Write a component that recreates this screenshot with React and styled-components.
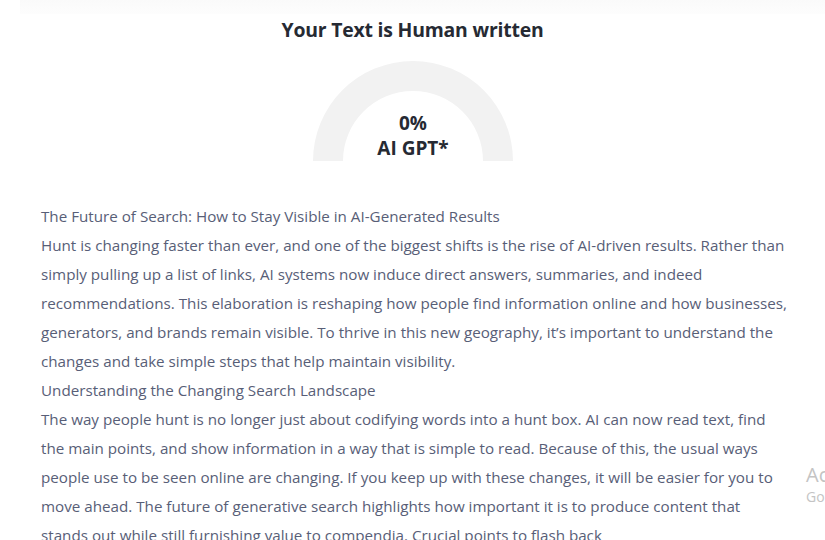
import React from 'react';
import styled, { createGlobalStyle } from 'styled-components';

const Global = createGlobalStyle`
  html, body { margin: 0; padding: 0; background: #fff; overflow: hidden; }
  body { font-family: "Open Sans", "Noto Sans", sans-serif; }
`;

const Page = styled.div`
  position: relative;
  width: 825px;
  height: 540px;
  overflow: hidden;
  background: #fff;
`;

const TopShade = styled.div`
  height: 14px;
  margin-left: 20px;
  background: linear-gradient(#fafafa, #fdfdfd);
`;

const Result = styled.section`
  display: flex;
  flex-direction: column;
  align-items: center;
  padding-top: 2px;
`;

const Heading = styled.h2`
  margin: 0;
  font-size: 19.4px;
  font-weight: 700;
  color: #262a33;
  line-height: 28px;
  letter-spacing: -0.2px;
`;

const Gauge = styled.div`
  position: relative;
  width: 200px;
  height: 100px;
  margin-top: 17px;
  margin-left: 1px;
`;

const GaugeLabel = styled.div`
  position: absolute;
  left: 0;
  right: 0;
  bottom: 0;
  text-align: center;
  font-size: 19px;
  font-weight: 700;
  line-height: 25px;
  color: #262a33;
`;

const Article = styled.article`
  width: 770px;
  padding: 41px 0 0 41px;
  font-size: 15.2px;
  line-height: 29px;
  color: #585e77;
  white-space: nowrap;
`;

const Line = styled.p`
  margin: 0;
`;

const Watermark = styled.div`
  position: absolute;
  left: 806px;
  top: 462px;
  color: #c4c4c4;
  font-family: "Open Sans", sans-serif;
  white-space: nowrap;
`;

const WmTitle = styled.div`
  font-size: 20px;
  line-height: 26px;
`;

const WmSub = styled.div`
  font-size: 14px;
  line-height: 18px;
`;

const intro = [
  'Hunt is changing faster than ever, and one of the biggest shifts is the rise of AI-driven results. Rather than',
  'simply pulling up a list of links, AI systems now induce direct answers, summaries, and indeed',
  'recommendations. This elaboration is reshaping how people find information online and how businesses,',
  'generators, and brands remain visible. To thrive in this new geography, it’s important to understand the',
  'changes and take simple steps that help maintain visibility.',
];

const landscape = [
  'The way people hunt is no longer just about codifying words into a hunt box. AI can now read text, find',
  'the main points, and show information in a way that is simple to read. Because of this, the usual ways',
  'people use to be seen online are changing. If you keep up with these changes, it will be easier for you to',
  'move ahead. The future of generative search highlights how important it is to produce content that',
  'stands out while still furnishing value to compendia. Crucial points to flash back',
];

const Para = ({ lines }) => (
  <Line>
    {lines.map((l, i) => (
      <React.Fragment key={i}>
        {l}
        {i < lines.length - 1 && <br />}
      </React.Fragment>
    ))}
  </Line>
);

export default function App() {
  return (
    <Page>
      <Global />
      <TopShade />
      <Result>
        <Heading>Your Text is Human written</Heading>
        <Gauge>
          <svg width="200" height="100" viewBox="0 0 200 100">
            <path d="M0 100 A100 100 0 0 1 200 100 L170 100 A70 70 0 0 0 30 100 Z" fill="#f2f2f2" />
          </svg>
          <GaugeLabel>
            0%<br />AI GPT*
          </GaugeLabel>
        </Gauge>
      </Result>
      <Article>
        <Line>The Future of Search: How to Stay Visible in AI-Generated Results</Line>
        <Para lines={intro} />
        <Line>Understanding the Changing Search Landscape</Line>
        <Para lines={landscape} />
      </Article>
      <Watermark>
        <WmTitle>Activate Windows</WmTitle>
        <WmSub>Go to Settings to activate Windows.</WmSub>
      </Watermark>
    </Page>
  );
}
